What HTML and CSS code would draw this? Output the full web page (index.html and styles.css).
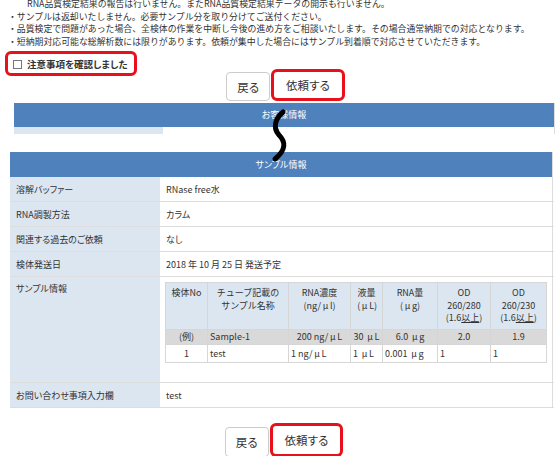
FILE: index.html
```html
<!DOCTYPE html>
<html lang="ja">
<head>
<meta charset="utf-8">
<title>依頼内容確認</title>
<link rel="stylesheet" href="styles.css">
</head>
<body>
<div class="notes">
  <p class="cont">RNA品質検定結果の報告は行いません。またRNA品質検定結果データの開示も行いません。</p>
  <p>・サンプルは返却いたしません。必要サンプル分を取り分けてご送付ください。</p>
  <p>・品質検定で問題があった場合、全検体の作業を中断し今後の進め方をご相談いたします。その場合通常納期での対応となります。</p>
  <p>・短納期対応可能な総解析数には限りがあります。依頼が集中した場合にはサンプル到着順で対応させていただきます。</p>
</div>

<label class="confirm"><span class="cb"></span><span>注意事項を確認しました</span></label>

<div class="actions">
  <button class="btn">戻る</button>
  <button class="btn btn-primary">依頼する</button>
</div>

<section class="sec sec-cut">
  <div class="sec-head">お客様情報</div>
  <div class="cut-row"><div class="cut-label"></div></div>
</section>

<section class="sec sec-sample">
  <div class="sec-head">サンプル情報</div>
  <div class="info">
    <div class="lbl">溶解バッファー</div><div class="val">RNase free水</div>
    <div class="lbl">RNA調製方法</div><div class="val">カラム</div>
    <div class="lbl">関連する過去のご依頼</div><div class="val">なし</div>
    <div class="lbl">検体発送日</div><div class="val">2018 年 10 月 25 日 発送予定</div>
    <div class="lbl lbl-top">サンプル情報</div>
    <div class="val val-table">
      <table class="samples">
        <colgroup>
          <col class="c1"><col class="c2"><col class="c3"><col class="c4"><col class="c5"><col class="c6"><col class="c7">
        </colgroup>
        <tr class="h">
          <th>検体No</th>
          <th>チューブ記載の<br>サンプル名称</th>
          <th>RNA濃度<br><span class="po">(</span>ng/<span class="mu">μ</span>l<span class="pc">)</span></th>
          <th>液量<br><span class="po">(</span><span class="mu">μ</span>L<span class="pc">)</span></th>
          <th>RNA量<br><span class="po">(</span><span class="mu">μ</span>g<span class="pc">)</span></th>
          <th>OD<br>260/280<br>(1.6<u>以上</u>)</th>
          <th>OD<br>260/230<br>(1.6<u>以上</u>)</th>
        </tr>
        <tr class="ex">
          <td class="c">(例)</td>
          <td>Sample-1</td>
          <td class="c">200 ng/<span class="mu">μ</span>L</td>
          <td class="c">30 <span class="mu">μ</span>L</td>
          <td class="c">6.0 <span class="mu">μ</span>g</td>
          <td class="c">2.0</td>
          <td class="c">1.9</td>
        </tr>
        <tr class="d">
          <td class="c">1</td>
          <td>test</td>
          <td>1 ng/<span class="mu">μ</span>L</td>
          <td>1 <span class="mu">μ</span>L</td>
          <td>0.001 <span class="mu">μ</span>g</td>
          <td>1</td>
          <td>1</td>
        </tr>
      </table>
    </div>
    <div class="lbl">お問い合わせ事項入力欄</div><div class="val">test</div>
  </div>
</section>

<div class="actions actions-bottom">
  <button class="btn">戻る</button>
  <button class="btn btn-primary">依頼する</button>
</div>

<svg class="break" width="559" height="456" viewBox="0 0 559 456">
  <path d="M283 112 C 276 118, 272 127, 279 135 C 286 142, 286 150, 275 159" fill="none" stroke="#000" stroke-width="5" stroke-linecap="round"/>
</svg>
</body>
</html>
```

FILE: styles.css
```css
html, body {
  margin: 0;
  overflow: hidden;
}
body {
  position: relative;
  width: 559px;
  height: 456px;
  font-family: "Noto Sans CJK JP", "Noto Sans", sans-serif;
  font-size: 9px;
  color: #333;
  font-feature-settings: "palt";
  background: #fff;
}

.notes {
  margin: -2px 0 0 8px;
  line-height: 12.5px;
  font-size: 8.9px;
  font-feature-settings: normal;
}
.notes p {
  margin: 0;
  white-space: nowrap;
}
.notes .cont {
  padding-left: 19px;
}

.confirm {
  margin: 3px 0 0 5px;
  width: 132px;
  height: 25px;
  box-sizing: border-box;
  border: 3px solid #e8101a;
  border-radius: 6px;
  display: flex;
  align-items: center;
  gap: 5px;
  padding-left: 5px;
  font-weight: bold;
  font-size: 9.5px;
  color: #333;
}
.cb {
  width: 9px;
  height: 9px;
  box-sizing: border-box;
  border: 1px solid #777;
  background: #fff;
  margin-top: 2px;
}

.actions {
  display: flex;
  justify-content: center;
  align-items: flex-end;
  gap: 1px;
  margin-top: -7px;
  padding-left: 12px;
}
.btn {
  font-family: inherit;
  font-feature-settings: "palt";
  font-size: 11.5px;
  color: #333;
  background: #fff;
  border: 1px solid #ccc;
  border-radius: 4px;
  height: 29px;
  padding: 0 10px;
}
.btn-primary {
  border: 3px solid #e8101a;
  border-radius: 6px;
  height: 32px;
  padding: 0 12px;
}
.actions-bottom {
  margin-top: 15px;
  padding-left: 9px;
}
.actions-bottom .btn { height: 30px; }
.actions-bottom .btn-primary { height: 34px; }

.sec-head {
  background: #4f81bd;
  color: #fff;
  text-align: center;
}
.sec-cut {
  margin: 2px 4px 0 14px;
  border-right: 1px solid #ddd;
}
.sec-cut .sec-head {
  height: 24px;
  line-height: 24px;
}
.cut-row {
  height: 7px;
}
.cut-label {
  width: 149px;
  height: 100%;
  background: #dce6f1;
}

.sec-sample {
  margin: 18px 6px 0 10px;
  border-right: 1px solid #ddd;
}
.sec-sample .sec-head {
  height: 25px;
  line-height: 25px;
}
.info {
  display: grid;
  grid-template-columns: 150px 1fr;
}
.lbl, .val {
  box-sizing: border-box;
  min-height: 25px;
  border-bottom: 1px solid #ddd;
  display: flex;
  align-items: center;
  padding-left: 6px;
}
.lbl {
  background: #dce6f1;
}
.lbl-top {
  align-items: flex-start;
  padding-top: 5px;
}
.val-table {
  display: block;
  padding: 5px 7px 19px 5px;
}

.samples {
  border-collapse: collapse;
  table-layout: fixed;
  width: 381px;
  font-size: 9px;
  font-feature-settings: normal;
}
.samples .c1 { width: 42px; }
.samples .c2 { width: 81px; }
.samples .c3 { width: 62px; }
.samples .c4 { width: 32px; }
.samples .c5 { width: 55px; }
.samples .c6 { width: 53px; }
.samples .c7 { width: 56px; }
.samples th, .samples td {
  border: 1px solid #d6d6d6;
  padding: 0 2px;
  white-space: nowrap;
  overflow: hidden;
}
.samples th {
  background: #dce6f1;
  font-weight: normal;
  vertical-align: top;
  text-align: center;
  line-height: 12.5px;
  padding-top: 4px;
  padding-bottom: 4px;
  height: 38px;
}
.samples tr.ex td {
  background: #d9d9d9;
  height: 14px;
  line-height: 14px;
}
.samples tr.d td {
  background: #fff;
  height: 17px;
  line-height: 17px;
}
.samples td.c {
  text-align: center;
}
.mu {
  display: inline-block;
  width: 1em;
  text-align: center;
}
.po, .pc {
  display: inline-block;
  width: 0.8em;
}
.po { text-align: right; }
.pc { text-align: left; }

.break {
  position: absolute;
  left: 0;
  top: 0;
  pointer-events: none;
}
```
